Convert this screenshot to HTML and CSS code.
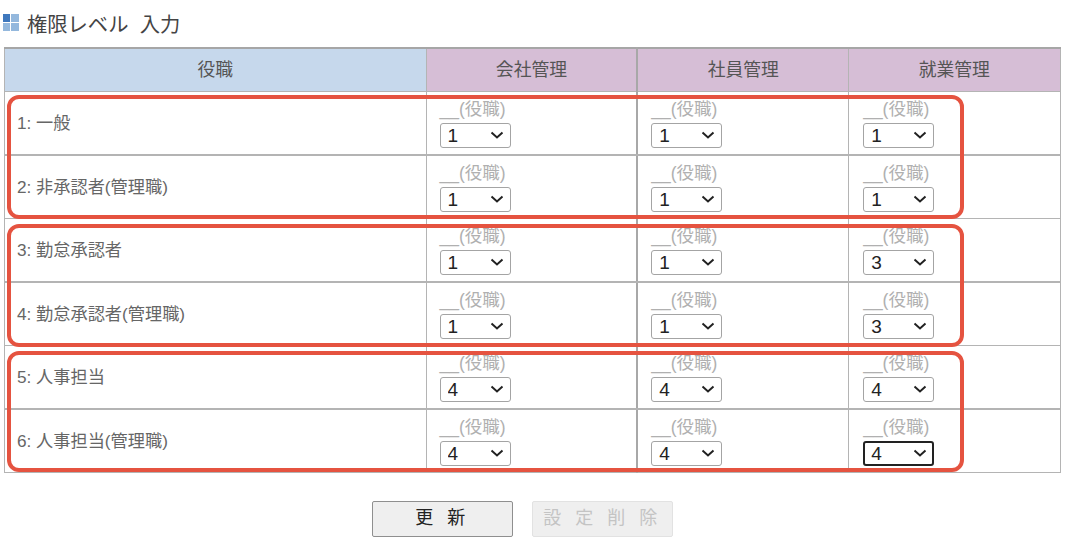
FILE: index.html
```html
<!DOCTYPE html>
<html lang="ja">

<head>
    <meta charset="UTF-8">
    <title>権限レベル 入力</title>
    <link rel="stylesheet" href="styles.css">
</head>

<body>
    <h1 class="title">
        <svg class="title-icon" width="16" height="17" viewBox="0 0 16 17">
            <rect x="0" y="0" width="7" height="8" fill="#3f78bd" />
            <rect x="8" y="0" width="8" height="8" fill="#94b8dd" />
            <rect x="0" y="9" width="7" height="8" fill="#94b8dd" />
            <rect x="8" y="9" width="8" height="8" fill="#94b8dd" />
        </svg>
        権限レベル&nbsp;&nbsp;入力
    </h1>

    <div class="table-wrap">
        <table class="level-table">
            <thead>
                <tr>
                    <th class="head-role">役職</th>
                    <th class="head-perm">会社管理</th>
                    <th class="head-perm">社員管理</th>
                    <th class="head-perm">就業管理</th>
                </tr>
            </thead>
            <tbody>
                <tr class="row-thick">
                    <td class="role"><span>1: 一般</span></td>
                    <td><div class="cur">__(役職)</div><select><option>1</option><option>3</option><option>4</option></select></td>
                    <td><div class="cur">__(役職)</div><select><option>1</option><option>3</option><option>4</option></select></td>
                    <td><div class="cur">__(役職)</div><select><option>1</option><option>3</option><option>4</option></select></td>
                </tr>
                <tr>
                    <td class="role"><span>2: 非承認者(管理職)</span></td>
                    <td><div class="cur">__(役職)</div><select><option>1</option><option>3</option><option>4</option></select></td>
                    <td><div class="cur">__(役職)</div><select><option>1</option><option>3</option><option>4</option></select></td>
                    <td><div class="cur">__(役職)</div><select><option>1</option><option>3</option><option>4</option></select></td>
                </tr>
                <tr class="row-thick">
                    <td class="role"><span>3: 勤怠承認者</span></td>
                    <td><div class="cur">__(役職)</div><select><option>1</option><option>3</option><option>4</option></select></td>
                    <td><div class="cur">__(役職)</div><select><option>1</option><option>3</option><option>4</option></select></td>
                    <td><div class="cur">__(役職)</div><select><option>3</option><option>1</option><option>4</option></select></td>
                </tr>
                <tr>
                    <td class="role"><span>4: 勤怠承認者(管理職)</span></td>
                    <td><div class="cur">__(役職)</div><select><option>1</option><option>3</option><option>4</option></select></td>
                    <td><div class="cur">__(役職)</div><select><option>1</option><option>3</option><option>4</option></select></td>
                    <td><div class="cur">__(役職)</div><select><option>3</option><option>1</option><option>4</option></select></td>
                </tr>
                <tr class="row-thick">
                    <td class="role"><span>5: 人事担当</span></td>
                    <td><div class="cur">__(役職)</div><select><option>4</option><option>1</option><option>3</option></select></td>
                    <td><div class="cur">__(役職)</div><select><option>4</option><option>1</option><option>3</option></select></td>
                    <td><div class="cur">__(役職)</div><select><option>4</option><option>1</option><option>3</option></select></td>
                </tr>
                <tr>
                    <td class="role"><span>6: 人事担当(管理職)</span></td>
                    <td><div class="cur">__(役職)</div><select><option>4</option><option>1</option><option>3</option></select></td>
                    <td><div class="cur">__(役職)</div><select><option>4</option><option>1</option><option>3</option></select></td>
                    <td><div class="cur">__(役職)</div><select class="focused"><option>4</option><option>1</option><option>3</option></select></td>
                </tr>
            </tbody>
        </table>

        <!-- red marks drawn over the table -->
        <div class="mark mark-1"></div>
        <div class="mark mark-2"></div>
        <div class="mark mark-3"></div>
    </div>

    <div class="buttons">
        <button type="button" class="btn">更 新</button>
        <button type="button" class="btn" disabled>設 定 削 除</button>
    </div>
</body>

</html>
```

FILE: styles.css
```css
* {
  box-sizing: border-box;
  font-family: "Liberation Sans", "Noto Sans CJK JP", sans-serif;
}

body {
  margin: 0;
  padding: 0 4px;
  background-color: #fff;
}

.title {
  display: flex;
  align-items: center;
  gap: 8px;
  height: 47px;
  margin: 0 0 0 -1px;
  padding-bottom: 2px;
  font-size: 20.3px;
  font-weight: normal;
  color: #444;
}

.title-icon {
  flex: none;
}

.table-wrap {
  position: relative;
  width: 1056.5px;
}

.level-table {
  width: 100%;
  border-collapse: collapse;
  table-layout: fixed;
  border-top: 2px solid #a6a6a6;
}

.level-table th,
.level-table td {
  border: 1px solid #b4b4b4;
}

.level-table th {
  height: 43px;
  padding-bottom: 4px;
  font-size: 17.8px;
  font-weight: normal;
  color: #555;
}

.level-table th:nth-child(3),
.level-table td:nth-child(3) {
  border-left: 2px solid #a8a8a8;
}

.head-role {
  width: 421.5px;
  background-color: #c6d8ec;
}

.head-perm {
  background-color: #d6bed6;
}

.level-table td {
  height: 63.5px;
  padding: 6px 0 0 13px;
  vertical-align: top;
}

.level-table td:last-child {
  padding-left: 14px;
}

.level-table tr.row-thick td {
  border-bottom: 2px solid #b4b4b4;
}

.level-table td.role {
  padding: 17.5px 0 0 12px;
  font-size: 17.2px;
  color: #666;
}

.cur {
  height: 25px;
  font-size: 17.5px;
  line-height: 23px;
  color: #b0b0b0;
  white-space: nowrap;
}

select {
  display: block;
  width: 71px;
  height: 25px;
  padding-left: 7px;
  font-size: 19px;
  color: #222;
  appearance: none;
  background: #fff url("data:image/svg+xml,%3Csvg xmlns='http://www.w3.org/2000/svg' width='14' height='8' viewBox='0 0 14 8'%3E%3Cpath d='M1.5 1.5 L7 6.5 L12.5 1.5' fill='none' stroke='%23222' stroke-width='2'/%3E%3C/svg%3E") no-repeat right 6px center;
  border: 1px solid #a4a4a4;
  border-radius: 3px;
}

select.focused {
  border: 2px solid #222;
  padding-left: 6px;
  background-position: right 5px center;
}

.mark {
  position: absolute;
  left: 3px;
  width: 957px;
  border: 4px solid #e55340;
  border-radius: 12px;
}

.mark-1 {
  top: 48px;
  height: 124px;
}

.mark-2 {
  top: 177px;
  height: 123px;
}

.mark-3 {
  top: 304px;
  height: 121px;
}

.buttons {
  display: flex;
  justify-content: center;
  gap: 19px;
  margin-top: 28px;
  padding-right: 21px;
}

.btn {
  width: 141px;
  height: 36px;
  padding-bottom: 6px;
  font-size: 18px;
  letter-spacing: 4.5px;
  color: #222;
  background-color: #efefef;
  border: 1px solid #8f8f8f;
  border-radius: 2px;
}

.btn:disabled {
  color: #c4c4c4;
  border-color: #e2e2e2;
}
```
